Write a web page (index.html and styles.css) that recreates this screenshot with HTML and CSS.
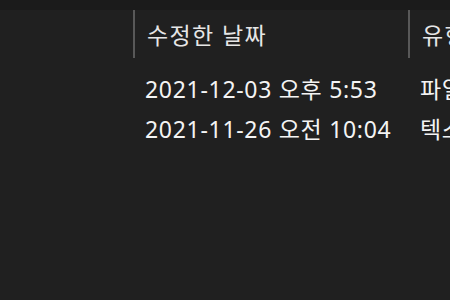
FILE: index.html
```html
<!DOCTYPE html>
<html lang="ko">
<head>
<meta charset="utf-8">
<link rel="stylesheet" href="styles.css">
</head>
<body>
<div class="topbar"></div>
<div class="view">
  <div class="header">
    <div class="col col-name"></div>
    <div class="col col-date"><span class="htext">수정한 날짜</span></div>
    <div class="col col-type"><span class="htext">유형</span></div>
  </div>
  <div class="row">
    <div class="cell col-name"></div>
    <div class="cell col-date">2021-12-03 오후 5:53</div>
    <div class="cell col-type">파일 폴더</div>
  </div>
  <div class="row">
    <div class="cell col-name"></div>
    <div class="cell col-date">2021-11-26 오전 10:04</div>
    <div class="cell col-type">텍스트 문서</div>
  </div>
</div>
</body>
</html>
```

FILE: styles.css
```css
html, body {
  margin: 0;
  padding: 0;
  background: #202020;
  width: 450px;
  height: 300px;
  overflow: hidden;
}
body {
  font-family: "Noto Sans", "Noto Sans CJK KR", sans-serif;
  font-size: 23px;
  letter-spacing: 0.7px;
  color: #f4f4f4;
}
.topbar {
  height: 10px;
  background: #1b1b1b;
}
.view {
  display: flex;
  flex-direction: column;
}
.header {
  display: flex;
  height: 48px;
  align-items: stretch;
}
.col {
  display: flex;
  align-items: center;
  box-sizing: border-box;
  white-space: nowrap;
  overflow: hidden;
}
.header .col-date,
.header .col-type {
  border-left: 2px solid #585858;
  padding-left: 12px;
}
.col-name { width: 133px; flex: none; }
.col-date { width: 275px; flex: none; }
.col-type { flex: 1; min-width: 0; }
.htext {
  color: #e6e6e6;
  letter-spacing: 1.4px;
  margin-top: -1px;
}
.row {
  display: flex;
  height: 40px;
  align-items: center;
  white-space: nowrap;
}
.header + .row { margin-top: 10px; }
.cell {
  box-sizing: border-box;
  overflow: hidden;
}
.row .col-date { padding-left: 12px; }
.row .col-type { padding-left: 12px; }
```
